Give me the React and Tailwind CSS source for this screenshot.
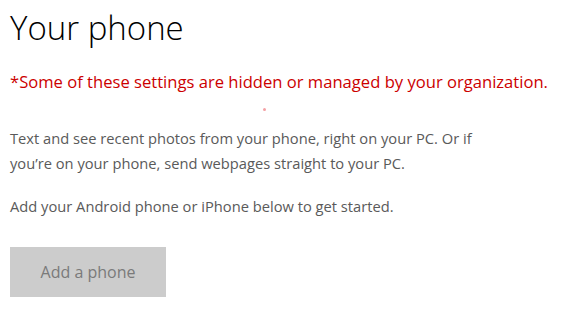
export default function App() {
  return (
    <div className="min-h-screen bg-white px-[10px] font-['Open_Sans',sans-serif]">
      <h1 className="pt-[6px] text-[33px] font-light leading-[44px] text-black">Your phone</h1>
      <p className="mt-[21px] text-[16.6px] leading-[22px] text-[#cc0000]">
        *Some of these settings are hidden or managed by your organization.
      </p>
      <div className="mt-[12px] flex h-[8px] items-center">
        <span className="ml-[253px] h-[3px] w-[3px] rounded-full bg-[#f4a0a4]" />
      </div>
      <p className="mt-[13px] max-w-[472px] text-[14.7px] leading-[25px] text-[#5a5a5a]">
        Text and see recent photos from your phone, right on your PC. Or if you’re on your phone, send webpages straight to your PC.
      </p>
      <p className="mt-[18px] text-[14.7px] leading-[25px] text-[#5a5a5a]">
        Add your Android phone or iPhone below to get started.
      </p>
      <button className="mt-[28px] flex h-[50px] w-[156px] items-center justify-center bg-[#cccccc] text-[16px] text-[#7a7a7a]">
        Add a phone
      </button>
    </div>
  )
}
